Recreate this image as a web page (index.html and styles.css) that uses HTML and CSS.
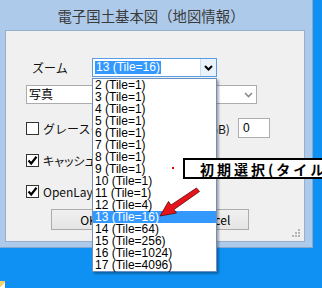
FILE: index.html
```html
<!DOCTYPE html>
<html lang="ja">
  <head>
    <meta charset="UTF-8" />
    <title>電子国土基本図（地図情報）</title>
    <link rel="stylesheet" href="styles.css">
  </head>
  <body>
    <div class="window">
      <div class="titlebar">電子国土基本図（地図情報）</div>
      <div class="client">
        <div class="row row-zoom">
          <span class="label">ズーム</span>
          <div class="combo combo-focus">
            <span class="combo-value"><span class="sel">13 (Tile=16)</span></span>
            <span class="combo-btn">
              <svg width="9" height="6" viewBox="0 0 9 6"><polyline points="1,1 4.5,4.5 8,1" fill="none" stroke="#000" stroke-width="2"/></svg>
            </span>
          </div>
        </div>
        <div class="row row-layer">
          <div class="combo combo-wide">
            <span class="combo-value">写真</span>
            <span class="combo-btn plain">
              <svg width="9" height="6" viewBox="0 0 9 6"><polyline points="1,1 4.5,4.5 8,1" fill="none" stroke="#8a8a8a" stroke-width="1.6"/></svg>
            </span>
          </div>
        </div>
        <div class="row row-gray">
          <label class="check"><span class="box"></span><span class="check-text">グレースケール変換して表示(RGB)</span></label>
          <div class="textbox">0</div>
        </div>
        <div class="row row-cache">
          <label class="check"><span class="box"><svg width="11" height="11" viewBox="0 0 11 11"><polyline points="1.5,5.5 4.2,8.5 9.5,1.8" fill="none" stroke="#000" stroke-width="2.2"/></svg></span><span class="check-text prop">キャッシュ有効</span></label>
          <div class="btn btn-cash">Cash削除</div>
        </div>
        <div class="row row-ol">
          <label class="check"><span class="box"><svg width="11" height="11" viewBox="0 0 11 11"><polyline points="1.5,5.5 4.2,8.5 9.5,1.8" fill="none" stroke="#000" stroke-width="2.2"/></svg></span><span class="check-text">OpenLayersを使用</span></label>
        </div>
        <div class="row row-buttons">
          <div class="btn btn-ok">OK</div>
          <div class="btn btn-cancel">Cancel</div>
        </div>
        <svg class="grip" width="9" height="9" viewBox="0 0 9 9">
          <rect x="6" y="0" width="2" height="2" fill="#b5b5b5"/>
          <rect x="3" y="3" width="2" height="2" fill="#b5b5b5"/>
          <rect x="6" y="3" width="2" height="2" fill="#b5b5b5"/>
          <rect x="0" y="6" width="2" height="2" fill="#b5b5b5"/>
          <rect x="3" y="6" width="2" height="2" fill="#b5b5b5"/>
          <rect x="6" y="6" width="2" height="2" fill="#b5b5b5"/>
        </svg>
      </div>
    </div>

    <ul class="dropdown">
      <li>2 (Tile=1)</li>
      <li>3 (Tile=1)</li>
      <li>4 (Tile=1)</li>
      <li>5 (Tile=1)</li>
      <li>6 (Tile=1)</li>
      <li>7 (Tile=1)</li>
      <li>8 (Tile=1)</li>
      <li>9 (Tile=1)</li>
      <li>10 (Tile=1)</li>
      <li>11 (Tile=1)</li>
      <li>12 (Tile=4)</li>
      <li class="active">13 (Tile=16)</li>
      <li>14 (Tile=64)</li>
      <li>15 (Tile=256)</li>
      <li>16 (Tile=1024)</li>
      <li>17 (Tile=4096)</li>
    </ul>

    <div class="callout">初期選択(タイル=16)</div>
    <span class="dot"></span>

    <svg class="arrow" width="322" height="288" viewBox="0 0 322 288">
      <polygon points="199.5,191.5 174,209.5 176.5,213 160,216 168.5,201.5 171,205 196.5,188" fill="#e8141b" stroke="#5a0a0a" stroke-width="0.8" stroke-linejoin="round"/>
    </svg>

    <span class="desk-icon"></span>
  </body>
</html>
```

FILE: styles.css
```css
body {
  margin: 0;
  width: 322px;
  height: 288px;
  overflow: hidden;
  position: relative;
  background-color: #0f91f3;
  font-family: "Noto Sans CJK JP", "Liberation Sans", sans-serif;
  font-size: 12px;
  color: #000;
}

/* window on the desktop */
.window {
  position: absolute;
  left: 0;
  top: 0;
  width: 313px;
  height: 248px;
  box-sizing: border-box;
  background-color: #aecaea;
  border-right: 1px solid #86a7cf;
  border-bottom: 1px solid #86a7cf;
  display: flex;
  flex-direction: column;
}
.titlebar {
  height: 30px;
  line-height: 32px;
  text-align: center;
  padding-right: 10px;
  font-size: 14.4px;
  color: #3a3a3a;
  white-space: nowrap;
}
.client {
  position: relative;
  margin-left: 5px;
  width: 300px;
  height: 212px;
  box-sizing: border-box;
  border: 1px solid #97afcc;
  background-color: #f0f0f0;
  display: flex;
  flex-direction: column;
  overflow: hidden;
}

.row {
  display: flex;
  align-items: center;
  flex-shrink: 0;
}
.row-zoom {
  margin-top: 27px;
  height: 19px;
}
.row-layer {
  margin-top: 8px;
  height: 19px;
  padding-left: 20px;
}
.row-gray {
  margin-top: 14px;
  height: 20px;
  padding-left: 20px;
}
.row-cache {
  margin-top: 12px;
  height: 21px;
  padding-left: 20px;
}
.row-ol {
  margin-top: 14px;
  height: 13px;
  padding-left: 20px;
}
.row-buttons {
  margin-top: 11px;
  height: 21px;
  padding-left: 45px;
  gap: 48px;
}

.label {
  width: 60px;
  padding-left: 26px;
  color: #111;
}

/* combo boxes */
.combo {
  display: flex;
  height: 19px;
  box-sizing: border-box;
  background-color: #fff;
  border: 1px solid #acacac;
}
.combo-focus {
  width: 125px;
  border-color: #569de5;
}
.combo-wide {
  width: 231px;
}
.combo-value {
  flex: 1;
  padding-left: 2px;
  line-height: 17px;
  font-family: "Liberation Sans", sans-serif;
  white-space: nowrap;
}
.combo-wide .combo-value {
  font-family: "Noto Sans CJK JP", sans-serif;
  line-height: 16px;
}
.sel {
  display: inline-block;
  height: 13px;
  line-height: 13px;
  padding: 0 1px;
  margin-top: 2px;
  background-color: #3399ff;
  color: #fff;
  vertical-align: top;
}
.combo-btn {
  width: 15px;
  display: flex;
  align-items: center;
  justify-content: center;
  border-left: 1px solid #c9dcf1;
  background-color: #eaf2fb;
}
.combo-btn.plain {
  border-left: none;
  background-color: #fff;
}

/* checkboxes */
.check {
  display: flex;
  align-items: center;
  gap: 4px;
  white-space: nowrap;
  color: #111;
}
.box {
  width: 13px;
  height: 13px;
  box-sizing: border-box;
  border: 1px solid #333;
  background-color: #fff;
  display: flex;
  align-items: center;
  justify-content: center;
}
.check-text {
  line-height: 13px;
}
.check-text.prop {
  font-feature-settings: "palt";
}
.row-gray .check {
  width: 212px;
}
.textbox {
  width: 32px;
  height: 20px;
  box-sizing: border-box;
  border: 1px solid #abadb3;
  background-color: #fff;
  padding-left: 4px;
  line-height: 18px;
  font-family: "Liberation Sans", sans-serif;
}

/* push buttons */
.btn {
  height: 21px;
  box-sizing: border-box;
  border: 1px solid #acacac;
  background: linear-gradient(#f0f0f0, #e5e5e5);
  text-align: center;
  line-height: 19px;
  white-space: nowrap;
}
.btn-cash {
  width: 67px;
  margin-left: 191px;
  line-height: 14px;
}
.btn-ok,
.btn-cancel {
  width: 75px;
}

.grip {
  position: absolute;
  right: 3px;
  bottom: 3px;
}

/* opened list of the zoom combo */
.dropdown {
  position: absolute;
  left: 92px;
  top: 78px;
  width: 125px;
  margin: 0;
  padding: 0;
  list-style: none;
  box-sizing: border-box;
  border: 1px solid #6a8fc0;
  background-color: #fff;
  box-shadow: 2px 2px 2px rgba(0, 0, 0, 0.3);
  font-family: "Liberation Sans", sans-serif;
}
.dropdown li {
  height: 12px;
  line-height: 12px;
  padding-left: 2px;
  white-space: nowrap;
}
.dropdown li.active {
  background-color: #3399ff;
  color: #fff;
}

/* annotation on top of the screenshot */
.callout {
  position: absolute;
  left: 183px;
  top: 158px;
  width: 139px;
  height: 21px;
  box-sizing: border-box;
  border: 2px solid #000;
  border-right: none;
  background-color: #fff;
  padding-left: 15px;
  font-size: 14px;
  font-weight: bold;
  letter-spacing: 3px;
  line-height: 19px;
  white-space: nowrap;
  overflow: hidden;
}
.dot {
  position: absolute;
  left: 172px;
  top: 167px;
  width: 2px;
  height: 2px;
  background-color: #e00;
}
.arrow {
  position: absolute;
  left: 0;
  top: 0;
}
.desk-icon {
  position: absolute;
  left: 0;
  top: 281px;
  width: 5px;
  height: 7px;
  background: linear-gradient(135deg, #f3d36a 50%, #fff 50%);
}
```
